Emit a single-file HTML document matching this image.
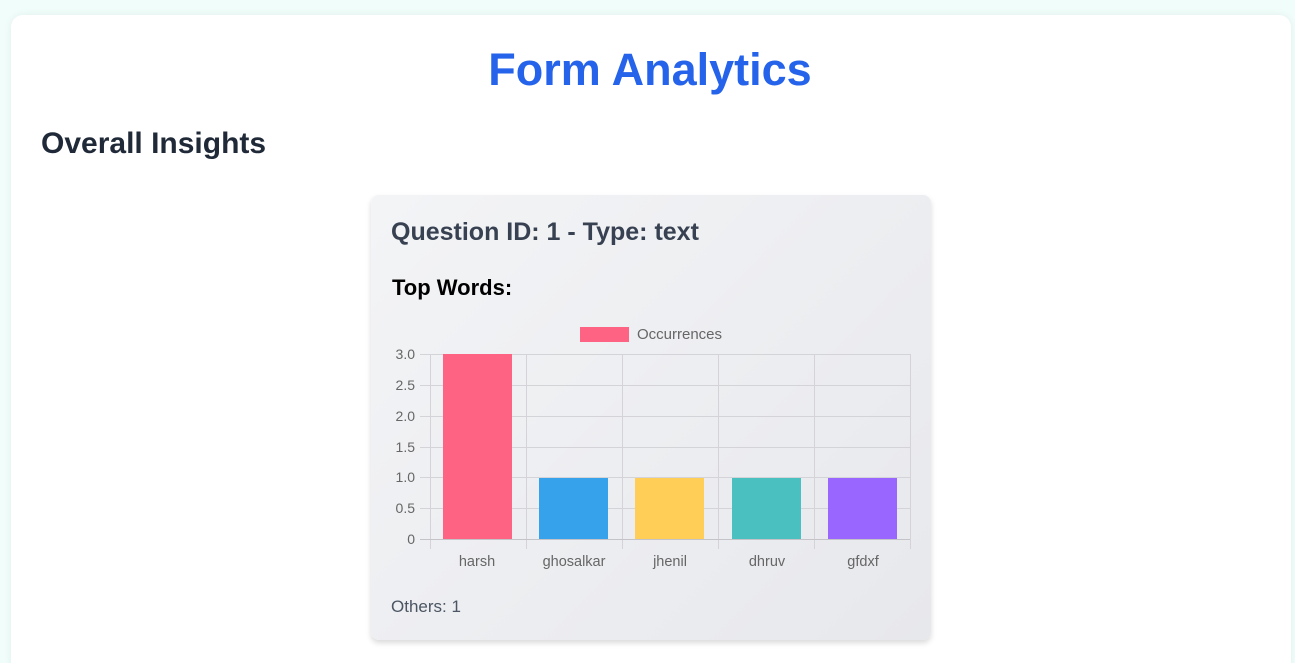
<!DOCTYPE html>
<html><head><meta charset="utf-8"><style>
html,body{margin:0;width:1295px;height:663px;overflow:hidden}
body{background:#f0fdfa;font-family:"Liberation Sans",sans-serif;position:relative}
.panel{position:absolute;left:11px;top:15px;width:1280px;height:660px;background:#fff;border-radius:12px;box-shadow:0 0 8px rgba(0,0,0,.06)}
h1{position:absolute;left:0;width:1300px;top:44px;margin:0;text-align:center;color:#2563eb;font-size:45px;font-weight:bold}
h2{position:absolute;left:41px;top:127px;margin:0;font-size:30px;color:#1f2937;font-weight:bold}
.card{position:absolute;left:371px;top:195px;width:560px;height:445px;border-radius:8px;background:linear-gradient(135deg,#f3f4f6,#e7e8ec);box-shadow:0 3px 6px rgba(0,0,0,.15)}
.t{position:absolute;margin:0;font-weight:bold}
</style></head><body>
<div class="panel"></div>
<h1>Form Analytics</h1>
<h2>Overall Insights</h2>
<div class="card"></div>
<div class="t" style="left:391px;top:218px;font-size:25px;color:#374151">Question ID: 1 - Type: text</div>
<div class="t" style="left:392px;top:275px;font-size:22px;color:#000">Top Words:</div>
<svg style="position:absolute;left:0;top:0" width="1295" height="663" font-family="Liberation Sans" font-size="14" fill="#666">
<rect x="580" y="327" width="49" height="15" fill="#ff6384"/>
<text x="637" y="339" font-size="15">Occurrences</text>
<g stroke="#d4d4d8" stroke-width="1">
<line x1="420" y1="354.5" x2="910" y2="354.5"/><line x1="420" y1="385.5" x2="910" y2="385.5"/><line x1="420" y1="416.5" x2="910" y2="416.5"/><line x1="420" y1="447.5" x2="910" y2="447.5"/><line x1="420" y1="477.5" x2="910" y2="477.5"/><line x1="420" y1="508.5" x2="910" y2="508.5"/>
<line x1="430.5" y1="354" x2="430.5" y2="549"/><line x1="526.5" y1="354" x2="526.5" y2="549"/><line x1="622.5" y1="354" x2="622.5" y2="549"/><line x1="718.5" y1="354" x2="718.5" y2="549"/><line x1="814.5" y1="354" x2="814.5" y2="549"/><line x1="910.5" y1="354" x2="910.5" y2="549"/>
</g>
<rect x="443" y="354" width="69" height="185" fill="#ff6384"/>
<rect x="539" y="478" width="69" height="61" fill="#36a2eb"/>
<rect x="635" y="478" width="69" height="61" fill="#ffce56"/>
<rect x="732" y="478" width="69" height="61" fill="#4bc0c0"/>
<rect x="828" y="478" width="69" height="61" fill="#9966ff"/>
<line x1="420" y1="539.5" x2="910" y2="539.5" stroke="#c4c4c8"/>
<g text-anchor="end"><text x="415" y="359">3.0</text><text x="415" y="390">2.5</text><text x="415" y="421">2.0</text><text x="415" y="452">1.5</text><text x="415" y="482">1.0</text><text x="415" y="513">0.5</text><text x="415" y="544">0</text></g>
<g text-anchor="middle" font-size="14.5"><text x="477" y="566">harsh</text><text x="574" y="566">ghosalkar</text><text x="670" y="566">jhenil</text><text x="767" y="566">dhruv</text><text x="863" y="566">gfdxf</text></g>
<text x="391" y="612" font-size="17" fill="#4b5563">Others: 1</text>
</svg>
</body></html>
